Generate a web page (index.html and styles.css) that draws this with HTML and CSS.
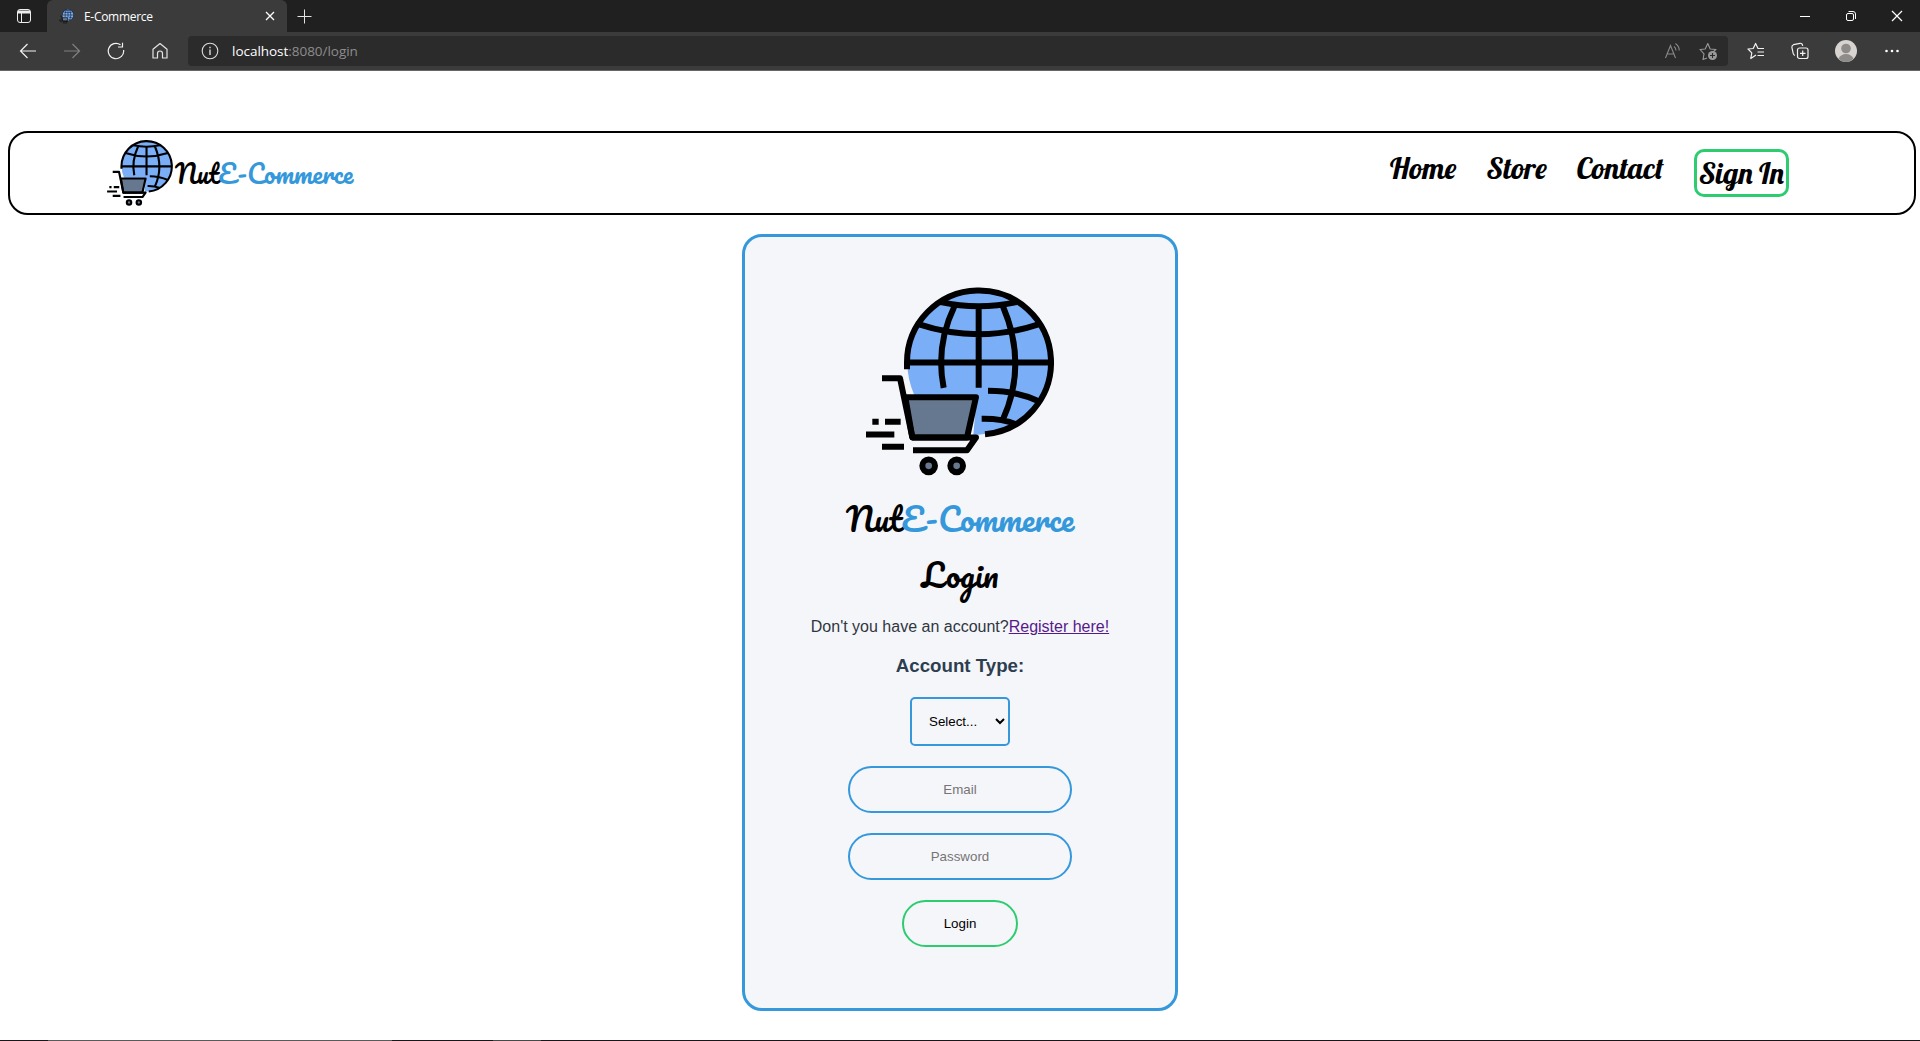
FILE: index.html
```html
<!DOCTYPE html>
<html lang="en">
<head>
<meta charset="utf-8">
<title>E-Commerce</title>
<link rel="stylesheet" href="styles.css">
</head>
<body>
<svg class="defs" width="0" height="0" aria-hidden="true">
  <symbol id="logo" viewBox="408 188 564 566">
    <path fill="#7aaff8" d="M532 414A215 215 0 1 1 770 628L730 632L740 512H553Q532 465 532 414Z"/>
    <g fill="none" stroke="#000" stroke-width="18">
      <path d="M531 434V414A216 216 0 1 1 765 629"/>
      <path d="M531 414H963M746 246V490M632 233Q746 258 860 233M565 299Q746 359 928 299M673 246Q616 365 641 490M819 246Q893 420 819 584M774 499Q860 499 928 531M755 583Q815 582 860 600"/>
      <path fill="#66788f" stroke-linejoin="round" d="M526 518H738L711 639H547Z"/>
      <path stroke-linejoin="round" d="M456 461H510L547 639H738L711 677H549"/>
      <path d="M427 592H446M465 592H512M408 630H493M456 667H522"/>
      <circle cx="596" cy="724" r="19" fill="#66788f"/>
      <circle cx="680" cy="724" r="19" fill="#66788f"/>
    </g>
  </symbol>
</svg>

<div class="browser">
  <div class="tabbar">
    <svg class="workspace" width="16" height="16" viewBox="0 0 16 16" fill="none" stroke="#eee"><rect x="1.5" y="1.5" width="13" height="13" rx="2.5"/><path d="M2 4h12" stroke-width="3"/><path d="M5.5 5v9"/></svg>
    <div class="tab">
      <svg width="15" height="15"><use href="#logo"/></svg>
      <span class="tab-title">E-Commerce</span>
      <svg width="10" height="10" viewBox="0 0 10 10" stroke="#fff" stroke-width="1.3"><path d="M1 1l8 8M9 1L1 9"/></svg>
    </div>
    <svg class="new-tab" width="15" height="15" viewBox="0 0 15 15" stroke="#e4e4e4"><path d="M.5 7.500h14M7.500 .5v14"/></svg>
    <div class="window-buttons">
      <svg width="12" height="12" viewBox="0 0 12 12" stroke="#fff"><path d="M1 6.500h10"/></svg>
      <svg width="12" height="12" viewBox="0 0 12 12" fill="none" stroke="#fff"><rect x="1.500" y="3.500" width="7" height="7" rx="1.500"/><path d="M3.500 1.500H8a2.500 2.500 0 0 1 2.500 2.500V9"/></svg>
      <svg width="12" height="12" viewBox="0 0 12 12" stroke="#fff" stroke-width="1.200"><path d="M1 1l10 10M11 1L1 11"/></svg>
    </div>
  </div>
  <div class="toolbar">
    <div class="nav-buttons">
      <svg width="18" height="18" viewBox="0 0 18 18" fill="none" stroke="#f2f2f2" stroke-width="1.200"><path d="M17 9H1.500M8.500 2l-7 7 7 7"/></svg>
      <svg width="18" height="18" viewBox="0 0 18 18" fill="none" stroke="#808080" stroke-width="1.200"><path d="M1 9h15.500M9.500 2l7 7-7 7"/></svg>
      <svg width="18" height="18" viewBox="0 0 18 18" fill="none" stroke="#f2f2f2" stroke-width="1.200"><path d="M16.600 8A7.700 7.700 0 1 1 13.500 2.800M15.500 .8V5h-4.500"/></svg>
      <svg width="18" height="18" viewBox="0 0 18 18" fill="none" stroke="#e4e4e4" stroke-width="1.200"><path d="M2 7.300L9 1.500l7 5.800V16h-4.500v-4.500a2.500 2.500 0 0 0-5 0V16H2z" stroke-linejoin="round"/></svg>
    </div>
    <div class="address">
      <svg width="18" height="18" viewBox="0 0 18 18" fill="none" stroke="#ddd" stroke-width="1.100"><circle cx="9" cy="9" r="7.800"/><path d="M9 7.500V13M9 4.700v1.600" stroke-width="1.400"/></svg>
      <span class="url"><b>localhost</b>:8080/login</span>
      <svg class="read" width="18" height="18" viewBox="0 0 18 18" fill="none" stroke="#898989" stroke-width="1.100"><path d="M1.500 16L6.500 3.500 11.500 16M3.200 12h6.600M10 4.500q2 1.500 2 4M11.500 1.500q4 3 3.700 7"/></svg>
      <svg width="19" height="19" viewBox="0 0 19 19" fill="none" stroke="#999" stroke-width="1.100"><path d="M8 16l-4 1.500 1-5.700L1 7.500 6.200 7 8.800 1.500 11.200 7l5.800.5-3 2.500" stroke-linejoin="round"/><circle cx="13.500" cy="13.500" r="4.500" fill="#999" stroke="none"/><path d="M13.500 11v5M11 13.500h5" stroke="#2b2b2b"/></svg>
    </div>
    <div class="tools">
      <svg width="18" height="18" viewBox="0 0 18 18" fill="none" stroke="#f2f2f2" stroke-width="1.200"><path d="M9 13l-5.200 3.500 1-5.700L1 7l5.200-.5L8.600 1.500 11 6.500h6M10.500 10H17M10.500 13.500H17" stroke-linejoin="round"/></svg>
      <svg width="18" height="18" viewBox="0 0 18 18" fill="none" stroke="#f2f2f2" stroke-width="1.200"><path d="M4 13.300Q2.500 13 2.200 11.500L.9 5.300Q.7 3.300 2.500 2.700L9 1.300Q11.300 1 11.700 3.800"/><rect x="6.500" y="6" width="10.500" height="10.500" rx="2"/><path d="M11.700 8.500v5.500M9 11.300h5.500"/></svg>
      <svg class="avatar" width="22" height="22" viewBox="0 0 22 22"><circle cx="11" cy="11" r="11" fill="#d6d3d1"/><circle cx="11" cy="8.500" r="4.800" fill="#8f8b88"/><path d="M3.500 18.500Q6 14 11 14t7.500 4.500Q15 22 11 22t-7.500-3.500z" fill="#8f8b88"/></svg>
      <svg width="14" height="4" viewBox="0 0 14 4" fill="#fff"><circle cx="1.500" cy="2" r="1.300"/><circle cx="7" cy="2" r="1.300"/><circle cx="12.500" cy="2" r="1.300"/></svg>
    </div>
  </div>
</div>

<header class="site-header">
  <a class="brand">
    <svg width="66" height="66"><use href="#logo"/></svg>
    <span class="brand-name">Nut<span class="blue">E-Commerce</span></span>
  </a>
  <nav class="menu">
    <a>Home</a>
    <a>Store</a>
    <a>Contact</a>
    <a class="sign-in">Sign In</a>
  </nav>
</header>

<main class="card">
  <svg width="188" height="189"><use href="#logo"/></svg>
  <div class="title">Nut<span class="blue">E-Commerce</span></div>
  <div class="heading">Login</div>
  <p class="register">Don't you have an account?<a href="#">Register here!</a></p>
  <h3 class="type-label">Account Type:</h3>
  <select class="type"><option>Select...</option></select>
  <input class="field" type="email" placeholder="Email">
  <input class="field" type="password" placeholder="Password">
  <button class="submit">Login</button>
</main>

<div class="taskbar"><i class="open"></i><i class="gap"></i><i class="active"></i></div>
</body>
</html>
```

FILE: styles.css
```css
* { box-sizing: border-box; }
body {
  margin: 0;
  height: 1041px;
  display: flex;
  flex-direction: column;
  background: #fff;
  font-family: "Liberation Sans", Arial, sans-serif;
  overflow: hidden;
}
svg { display: block; flex: none; }
.defs { position: absolute; }

.browser {
  height: 71px;
  flex: none;
  background: #3b3b3b;
  border-bottom: 1px solid #666;
  font-family: "Open Sans", "Noto Sans", sans-serif;
}
.tabbar {
  height: 32px;
  display: flex;
  align-items: center;
  background: #202020;
}
.workspace { margin: 0 15px 0 16px; }
.tab {
  width: 240px;
  height: 32px;
  padding: 0 12px;
  display: flex;
  align-items: center;
  background: #3b3b3b;
  border-radius: 6px 6px 0 0;
}
.tab-title {
  flex: 1;
  margin-left: 10px;
  color: #fff;
  font-size: 12px;
  letter-spacing: -.3px;
}
.new-tab { margin-left: 10px; }
.window-buttons {
  margin: 0 17px 0 auto;
  display: flex;
  gap: 34px;
}
.toolbar {
  height: 38px;
  display: flex;
  align-items: center;
}
.nav-buttons {
  width: 188px;
  padding-left: 19px;
  display: flex;
  gap: 26px;
}
.address {
  width: 1540px;
  height: 30px;
  padding: 0 10px 0 13px;
  display: flex;
  align-items: center;
  background: #2b2b2b;
  border-radius: 4px;
}
.url {
  flex: 1;
  margin-left: 13px;
  color: #8d8d8d;
  font-size: 13.5px;
  letter-spacing: -.03px;
}
.url b { color: #fff; font-weight: 400; }
.read { margin-right: 17px; }
.tools {
  flex: 1;
  padding: 0 21px 0 19px;
  display: flex;
  align-items: center;
}
.tools svg { margin-right: 26px; }
.tools .avatar { margin-right: 28px; }
.tools svg:last-child { margin-right: 0; }

.site-header {
  width: 1908px;
  height: 84px;
  flex: none;
  margin: 60px 0 0 8px;
  padding: 0 125px 0 97px;
  display: flex;
  justify-content: space-between;
  align-items: flex-start;
  border: 2px solid #000;
  border-radius: 20px;
}
.brand { display: flex; padding-top: 7px; }
.brand-name,
.title,
.heading {
  font-family: Pacifico, cursive;
  white-space: nowrap;
}
.brand-name {
  margin: 11px 0 0 2px;
  font-size: 25px;
  line-height: 44px;
}
.blue { color: #3498db; }
.menu {
  display: flex;
  gap: 30px;
  padding-top: 16px;
  font: 30px/38px Lobster, cursive;
  white-space: nowrap;
}
.sign-in {
  height: 48px;
  padding: 2px;
  border: 3px solid #2ecc71;
  border-radius: 10px;
}

.card {
  width: 436px;
  height: 777px;
  flex: none;
  margin: 19px auto 29px;
  padding-top: 50px;
  display: flex;
  flex-direction: column;
  align-items: center;
  background: #f5f6fa;
  border: 3px solid #3498db;
  border-radius: 20px;
}
.title,
.heading {
  flex: none;
  font-size: 32px;
  line-height: 56px;
}
.title { margin-top: 14px; }
.register {
  margin: 16px 0 0;
  font-size: 16px;
  line-height: 18px;
  color: #2f3640;
}
.register a { color: #551a8b; }
.type-label {
  margin: 19px 0 0;
  font-size: 18.72px;
  line-height: 22px;
  color: #2c3e50;
}
.type,
.field,
.submit {
  flex: none;
  background: none;
  border: 2px solid #3498db;
  font: 13.333px "Liberation Sans", Arial, sans-serif;
  color: #000;
}
.type {
  width: 100px;
  height: 49px;
  margin-top: 20px;
  padding: 14px 1px 14px 13px;
  border-radius: 5px;
}
.field {
  width: 224px;
  height: 47px;
  margin-top: 20px;
  border-radius: 24px;
  text-align: center;
}
.submit {
  width: 116px;
  height: 47px;
  margin-top: 20px;
  border-color: #2ecc71;
  border-radius: 24px;
}

.taskbar {
  height: 1px;
  flex: none;
  display: flex;
  padding-left: 48px;
  background: #1a1518;
}
.open { width: 344px; background: #5a5a5a; }
.gap { width: 101px; }
.active { width: 48px; background: #484848; }
```
